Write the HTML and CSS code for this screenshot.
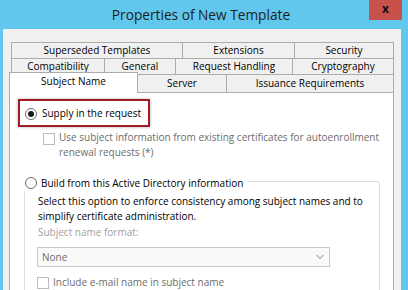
FILE: index.html
```html
<!DOCTYPE html>
<html lang="en">
<head>
    <meta charset="UTF-8">
    <title>Properties of New Template</title>
    <link rel="stylesheet" href="styles.css">
</head>
<body>
    <div class="titlebar">
        <div class="title">Properties of New Template</div>
        <div class="close">x</div>
    </div>
    <div class="client">
        <div class="tabs">
            <div class="tab-row">
                <div class="tab t-superseded">Superseded Templates</div>
                <div class="tab t-extensions">Extensions</div>
                <div class="tab t-security">Security</div>
            </div>
            <div class="tab-row">
                <div class="tab t-compat">Compatibility</div>
                <div class="tab t-general">General</div>
                <div class="tab t-request">Request Handling</div>
                <div class="tab t-crypto">Cryptography</div>
            </div>
            <div class="tab-row front">
                <div class="tab active t-subject">Subject Name</div>
                <div class="tab t-server">Server</div>
                <div class="tab t-issuance">Issuance Requirements</div>
            </div>
        </div>
        <div class="panel">
            <div class="highlight">
                <span class="radio checked"></span>
                <span>Supply in the request</span>
            </div>
            <div class="option sub disabled">
                <span class="checkbox"></span>
                <span>Use subject information from existing certificates for autoenrollment<br>renewal requests (*)</span>
            </div>
            <div class="group">
                <div class="group-head">
                    <span class="radio"></span>
                    <span>Build from this Active Directory information</span>
                </div>
                <p class="hint">Select this option to enforce consistency among subject names and to<br>simplify certificate administration.</p>
                <div class="field-label">Subject name format:</div>
                <div class="combo">
                    <span>None</span>
                    <svg width="8" height="6" viewBox="0 0 8 6"><path d="M0.5 1 L4 4.5 L7.5 1" fill="none" stroke="#b4b4b4" stroke-width="1.2"/></svg>
                </div>
                <div class="option disabled">
                    <span class="checkbox"></span>
                    <span>Include e-mail name in subject name</span>
                </div>
            </div>
        </div>
    </div>
</body>
</html>
```

FILE: styles.css
```css
body {
    margin: 0;
    width: 408px;
    height: 290px;
    overflow: hidden;
    background-color: #61c7ec;
    font-family: "Segoe UI", "Open Sans", sans-serif;
    font-size: 10px;
    color: #000;
}
.titlebar {
    display: flex;
    height: 29px;
    padding-left: 33px;
}
.title {
    flex: 1;
    text-align: center;
    font-size: 13.7px;
    line-height: 30px;
    color: #1e1e1e;
}
.close {
    width: 33px;
    height: 20px;
    margin-right: 6px;
    background-color: #c8524b;
    color: #111;
    font-weight: bold;
    font-size: 12px;
    line-height: 18px;
    text-align: center;
}
.client {
    margin: 0 7px 0 3px;
    height: 261px;
    padding: 13px 7px 0 6px;
    background-color: #f0f0f0;
}
.tabs {
    margin-left: 2px;
}
.tab-row {
    display: flex;
    height: 16px;
}
.tab-row.front {
    height: 18px;
    align-items: flex-end;
}
.tab {
    box-sizing: border-box;
    height: 16px;
    margin-left: -1px;
    border: 1px solid #acacac;
    border-bottom: none;
    background-color: #f0f0f0;
    text-align: center;
    line-height: 14px;
    white-space: nowrap;
}
.tab:first-child {
    margin-left: 0;
}
.front .tab {
    height: 18px;
    line-height: 16px;
}
.front .tab.active {
    position: relative;
    z-index: 1;
    height: 21px;
    margin: 0 0 -1px -2px;
    background-color: #fff;
    line-height: 17px;
}
.t-superseded { width: 172px; }
.t-extensions { width: 113px; }
.t-security { width: 100px; }
.t-compat { width: 94px; }
.t-general { width: 72px; }
.t-request { width: 118px; }
.t-crypto { width: 102px; }
.t-subject { width: 129px; }
.t-server { width: 90px; }
.t-issuance { width: 168px; }

.panel {
    height: 200px;
    border: 1px solid #acacac;
    background-color: #fff;
    padding-top: 6px;
}
.highlight {
    display: flex;
    align-items: center;
    gap: 5px;
    width: fit-content;
    margin-left: 8px;
    padding: 5px 7px 4px 5px;
    border: 2px solid #a01c24;
    box-shadow: 0 0 3px rgba(0, 0, 0, 0.3);
    line-height: 15px;
}
.radio {
    box-sizing: border-box;
    width: 12px;
    height: 12px;
    border: 1px solid #6e6e6e;
    border-radius: 50%;
    background-color: #fff;
    display: flex;
    align-items: center;
    justify-content: center;
    flex-shrink: 0;
}
.radio.checked::after {
    content: "";
    width: 6px;
    height: 6px;
    border-radius: 50%;
    background-color: #1a1a1a;
}
.checkbox {
    box-sizing: border-box;
    width: 12px;
    height: 12px;
    border: 1px solid #bcbcbc;
    background-color: #fff;
    flex-shrink: 0;
}
.option {
    display: flex;
    align-items: flex-start;
    gap: 4px;
    line-height: 16px;
}
.option .checkbox {
    margin-top: 3px;
}
.option.sub {
    margin: 3px 0 0 33px;
    line-height: 15px;
}
.disabled {
    color: #6d6d6d;
}
.group {
    margin: 21px 13px 0 14px;
    height: 120px;
    padding: 0 0 0 13px;
    border: 1px solid #dcdcdc;
    border-radius: 3px;
}
.group-head {
    display: flex;
    align-items: center;
    gap: 4px;
    width: fit-content;
    margin: -7px 0 0 -14px;
    padding: 0 5px 0 1px;
    background-color: #fff;
    line-height: 16px;
}
.hint {
    margin: 3px 0 0;
    line-height: 15px;
}
.field-label {
    margin-top: 1px;
    line-height: 15px;
    color: #a0a0a0;
}
.combo {
    box-sizing: border-box;
    display: flex;
    align-items: center;
    justify-content: space-between;
    width: 293px;
    height: 20px;
    margin: 7px 0 0 -1px;
    padding: 0 5px 0 4px;
    border: 1px solid #c8c8c8;
    background-color: #fafafa;
    color: #6d6d6d;
}
.group .option {
    margin: 7px 0 0 -1px;
}
```
